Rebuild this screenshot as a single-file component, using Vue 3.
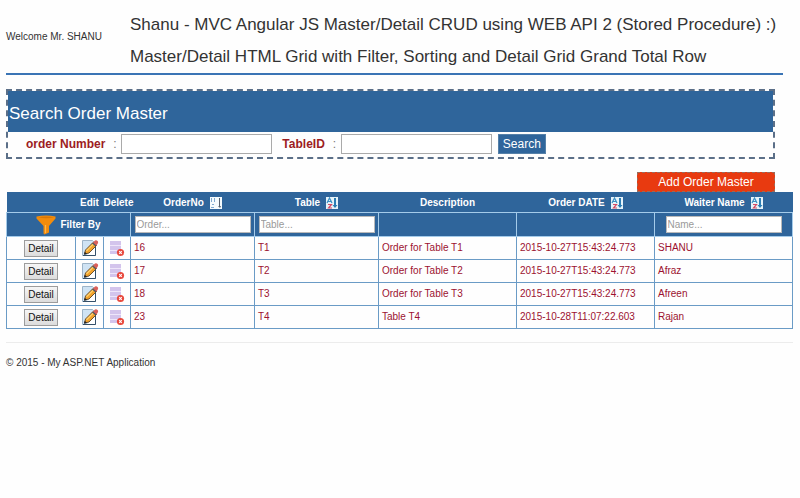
<script setup>
import { ref, computed } from 'vue'

const orders = ref([
  { no: 16, table: 'T1', description: 'Order for Table T1', date: '2015-10-27T15:43:24.773', waiter: 'SHANU' },
  { no: 17, table: 'T2', description: 'Order for Table T2', date: '2015-10-27T15:43:24.773', waiter: 'Afraz' },
  { no: 18, table: 'T3', description: 'Order for Table T3', date: '2015-10-27T15:43:24.773', waiter: 'Afreen' },
  { no: 23, table: 'T4', description: 'Table T4', date: '2015-10-28T11:07:22.603', waiter: 'Rajan' },
])

const orderNumber = ref('')
const tableId = ref('')
const filterOrder = ref('')
const filterTable = ref('')
const filterWaiter = ref('')

const has = (value, part) => String(value).toLowerCase().includes(part.toLowerCase())
const rows = computed(() =>
  orders.value.filter(
    (o) => has(o.no, filterOrder.value) && has(o.table, filterTable.value) && has(o.waiter, filterWaiter.value),
  ),
)
</script>

<template>
  <div class="page">
    <header class="top">
      <p class="welcome">Welcome Mr. SHANU</p>
      <h1 class="title">
        <span>Shanu - MVC Angular JS Master/Detail CRUD using WEB API 2 (Stored Procedure) :)</span>
        <span>Master/Detail HTML Grid with Filter, Sorting and Detail Grid Grand Total Row</span>
      </h1>
    </header>

    <main>
      <form class="search" @submit.prevent>
        <h2 class="search-title">Search Order Master</h2>
        <div class="search-row">
          <label class="field-label" for="order-number">order Number</label>
          <span class="colon">:</span>
          <input id="order-number" v-model="orderNumber" class="field" type="text" />
          <label class="field-label second" for="table-id">TableID</label>
          <span class="colon">:</span>
          <input id="table-id" v-model="tableId" class="field" type="text" />
          <button class="search-button" type="submit">Search</button>
        </div>
      </form>

      <div class="actions">
        <button class="add" type="button">Add Order Master</button>
      </div>

      <table class="grid">
        <colgroup>
          <col class="c-detail" />
          <col class="c-edit" />
          <col class="c-delete" />
          <col class="c-small" />
          <col class="c-small" />
          <col class="c-wide" />
          <col class="c-wide" />
          <col class="c-wide" />
        </colgroup>
        <thead>
          <tr class="head">
            <td></td>
            <th scope="col">Edit</th>
            <th scope="col">Delete</th>
            <th scope="col">
              <span class="sortable">OrderNo
                <svg class="sort" viewBox="0 0 12 12" aria-hidden="true">
                  <rect width="12" height="12" fill="#f4fafd" />
                  <path d="M1 1h1v4H1zM4 1h1v4H4zM2 7h2v1H2zM1 10h3v1H1z" fill="#7fa9cf" />
                  <path d="M9 1h1v8h1l-1 2-2-2h1z" fill="#55606e" />
                </svg>
              </span>
            </th>
            <th scope="col">
              <span class="sortable">Table
                <svg class="sort" viewBox="0 0 12 12" aria-hidden="true">
                  <rect width="12" height="12" fill="#e6f3f9" />
                  <path d="M1 6L3.5 1L6 6M2 4.5h3" fill="none" stroke="#3b8fc4" stroke-width="1.2" />
                  <path d="M2 7.5h3.5L2.5 11H6" fill="none" stroke="#d64a64" stroke-width="1.2" />
                  <path d="M8 1h2v7h1.5L9 11L6.5 8H8z" fill="#2b7db4" />
                </svg>
              </span>
            </th>
            <th scope="col">Description</th>
            <th scope="col">
              <span class="sortable">Order DATE
                <svg class="sort" viewBox="0 0 12 12" aria-hidden="true">
                  <rect width="12" height="12" fill="#e6f3f9" />
                  <path d="M1 6L3.5 1L6 6M2 4.5h3" fill="none" stroke="#3b8fc4" stroke-width="1.2" />
                  <path d="M2 7.5h3.5L2.5 11H6" fill="none" stroke="#d64a64" stroke-width="1.2" />
                  <path d="M8 1h2v7h1.5L9 11L6.5 8H8z" fill="#2b7db4" />
                </svg>
              </span>
            </th>
            <th scope="col">
              <span class="sortable">Waiter Name
                <svg class="sort" viewBox="0 0 12 12" aria-hidden="true">
                  <rect width="12" height="12" fill="#e6f3f9" />
                  <path d="M1 6L3.5 1L6 6M2 4.5h3" fill="none" stroke="#3b8fc4" stroke-width="1.2" />
                  <path d="M2 7.5h3.5L2.5 11H6" fill="none" stroke="#d64a64" stroke-width="1.2" />
                  <path d="M8 1h2v7h1.5L9 11L6.5 8H8z" fill="#2b7db4" />
                </svg>
              </span>
            </th>
          </tr>
          <tr class="filters">
            <td colspan="3">
              <div class="filter-by">
                <svg class="funnel" viewBox="0 0 20 20" aria-hidden="true">
                  <path d="M0.5 1.5Q10 -0.5 19.5 1.5V3.5L13 11V17.5L8.5 19.5L7.5 18.5V11L0.5 3.5Z" fill="#f28c0c" />
                  <path d="M2 2.3Q10 0.8 18 2.3Q10 4 2 2.3Z" fill="#d97706" />
                  <path d="M9.5 10v8" stroke="#ffb648" stroke-width="1.2" />
                </svg>
                Filter By
              </div>
            </td>
            <td><input v-model="filterOrder" class="filter" type="text" placeholder="Order..." aria-label="Order" /></td>
            <td><input v-model="filterTable" class="filter" type="text" placeholder="Table..." aria-label="Table" /></td>
            <td></td>
            <td></td>
            <td><input v-model="filterWaiter" class="filter" type="text" placeholder="Name..." aria-label="Name" /></td>
          </tr>
        </thead>
        <tbody>
          <tr v-for="order in rows" :key="order.no">
            <td class="center"><button class="detail" type="button">Detail</button></td>
            <td class="center">
              <button class="icon-button" type="button" aria-label="Edit">
                <svg viewBox="0 0 18 18" aria-hidden="true">
                  <path d="M1.5 1.5H11.5L14.500 4.500V16.500H1.5Z" fill="#cfe3f4" stroke="#9db4c8" />
                  <path d="M14.500 8V16.500H2" fill="none" stroke="#34506a" />
                  <path d="M6 16H14V8Z" fill="#ffffff" />
                  <path d="M3.5 15L4.500 11L12 3.500L15.500 6.500L8 14Z" fill="#f2a22c" stroke="#5e4322" stroke-width="0.9" />
                  <path d="M5.500 11.800L12.800 4.600" stroke="#ffd470" stroke-width="1.2" />
                  <path d="M12 3.500L14 1.500Q15.5 0.8 17 2.5Q17.5 3.8 16.5 5L15 7Z" fill="#d9605a" />
                  <path d="M11.500 4L15 7" stroke="#4a5560" stroke-width="1.2" />
                  <path d="M3 15.700L3.8 12.800L6 15Z" fill="#222222" />
                </svg>
              </button>
            </td>
            <td class="center">
              <button class="icon-button" type="button" aria-label="Delete">
                <svg viewBox="0 0 18 18" aria-hidden="true">
                  <path d="M2 2h11v4H2zM2 7h11v4H2zM2 12h11v3H2z" fill="#d3c4ec" />
                  <path d="M2 6.5h11M2 11.5h11" stroke="#eee6fa" />
                  <circle cx="12.500" cy="13.500" r="3.600" fill="#e8483c" />
                  <path d="M11.200 12.200L13.800 14.800M13.800 12.200L11.200 14.800" stroke="#ffffff" stroke-width="1.1" />
                </svg>
              </button>
            </td>
            <td>{{ order.no }}</td>
            <td>{{ order.table }}</td>
            <td>{{ order.description }}</td>
            <td>{{ order.date }}</td>
            <td>{{ order.waiter }}</td>
          </tr>
        </tbody>
      </table>
    </main>

    <footer class="footer">© 2015 - My ASP.NET Application</footer>
  </div>
</template>

<style>
body {
  background: #fefefe;
}
</style>

<style scoped>
.page {
  padding: 0 7px 0 6px;
  font-family: "Liberation Sans", Arial, sans-serif;
  font-size: 10px;
  line-height: 16px;
  color: #333;
}
.page *,
.page {
  box-sizing: border-box;
}
input,
button {
  font-family: inherit;
  margin: 0;
}
.top {
  display: flex;
  align-items: center;
  margin-right: 10px;
  padding: 9px 0 0;
  border-bottom: 2px solid #3a74b5;
}
.welcome {
  flex: 0 0 124px;
  margin: 0;
  padding-bottom: 8px;
}
.title {
  display: flex;
  flex-direction: column;
  margin: 0;
  font-size: 17px;
  font-weight: 400;
  line-height: 32px;
  white-space: nowrap;
}
.search {
  margin: 14px 18px 0 0;
  border: 2px dashed #5b6f88;
}
.search-title {
  margin: 0;
  padding: 12px 1px 8px;
  background: #2f659b;
  color: #fff;
  font-size: 17px;
  font-weight: 400;
  line-height: 21px;
}
.search-row {
  display: flex;
  align-items: center;
  padding: 2px 0 3px 18px;
}
.field-label {
  color: #9c1c22;
  font-size: 12px;
  font-weight: 700;
}
.second {
  margin-left: 10px;
}
.colon {
  width: 16px;
  padding-left: 8px;
  color: #777;
  font-size: 12px;
}
.field {
  width: 151px;
  height: 20px;
  padding: 0 4px;
  border: 1px solid #aaa;
  background: #fff;
  font-size: 12px;
}
.search-button {
  height: 20px;
  margin-left: 6px;
  padding: 0 4px;
  border: 1px solid #5580a8;
  background: #2f659b;
  color: #fff;
  font-size: 12px;
  line-height: 18px;
}
.actions {
  display: flex;
  justify-content: flex-end;
  margin: 13px 18px 0 0;
}
.add {
  width: 138px;
  height: 20px;
  padding: 0;
  border: 1px dashed #9a6a5a;
  background: #e83a10;
  color: #fff;
  font-size: 12px;
  line-height: 18px;
}
.grid {
  width: 100%;
  table-layout: fixed;
  border-collapse: collapse;
}
.c-detail { width: 69px; }
.c-edit { width: 28px; }
.c-delete { width: 27px; }
.c-small { width: 124px; }
.c-wide { width: 138px; }
.grid thead {
  background: #2f659b;
  color: #fff;
}
.grid th,
.grid td {
  padding: 0 3px;
  border: 1px solid #6a9bc6;
  text-align: left;
  white-space: nowrap;
}
.grid .head th,
.grid .head td {
  height: 20px;
  padding: 0;
  border-width: 1px 0;
  border-bottom-color: #a4cbea;
  border-top-color: #2f659b;
  text-align: center;
}
.sortable {
  display: inline-flex;
  align-items: center;
  gap: 6px;
}
.filter-by {
  display: flex;
  align-items: center;
  justify-content: center;
  gap: 4px;
  font-weight: 700;
}
.sort {
  width: 12px;
  height: 12px;
}
.grid .filters td {
  height: 24px;
  border-color: #a4cbea;
  text-align: center;
}
.funnel {
  width: 20px;
  height: 20px;
}
.filter {
  display: block;
  width: 116px;
  height: 17px;
  margin: 0 auto;
  padding: 0 1px;
  border: 1px solid #b9b9b9;
  background: #fff;
  font-size: 10px;
}
.filter::placeholder {
  color: #9a9a9a;
}
.grid tbody td {
  height: 23px;
  color: #9c1230;
}
.grid tbody .center {
  padding: 0;
  text-align: center;
}
.detail {
  display: block;
  width: 34px;
  height: 17px;
  margin: 0 auto;
  padding: 0;
  border: 1px solid #9c9c9c;
  background: linear-gradient(#f6f6f6, #dcdcdc);
  color: #111;
  font-size: 10px;
  line-height: 15px;
}
.icon-button {
  display: block;
  width: 18px;
  height: 18px;
  margin: 0 auto;
  padding: 0;
  border: 0;
  background: none;
}
.icon-button svg {
  display: block;
  width: 18px;
  height: 18px;
}
.footer {
  margin-top: 13px;
  padding-top: 12px;
  border-top: 1px solid #ececec;
}
</style>
